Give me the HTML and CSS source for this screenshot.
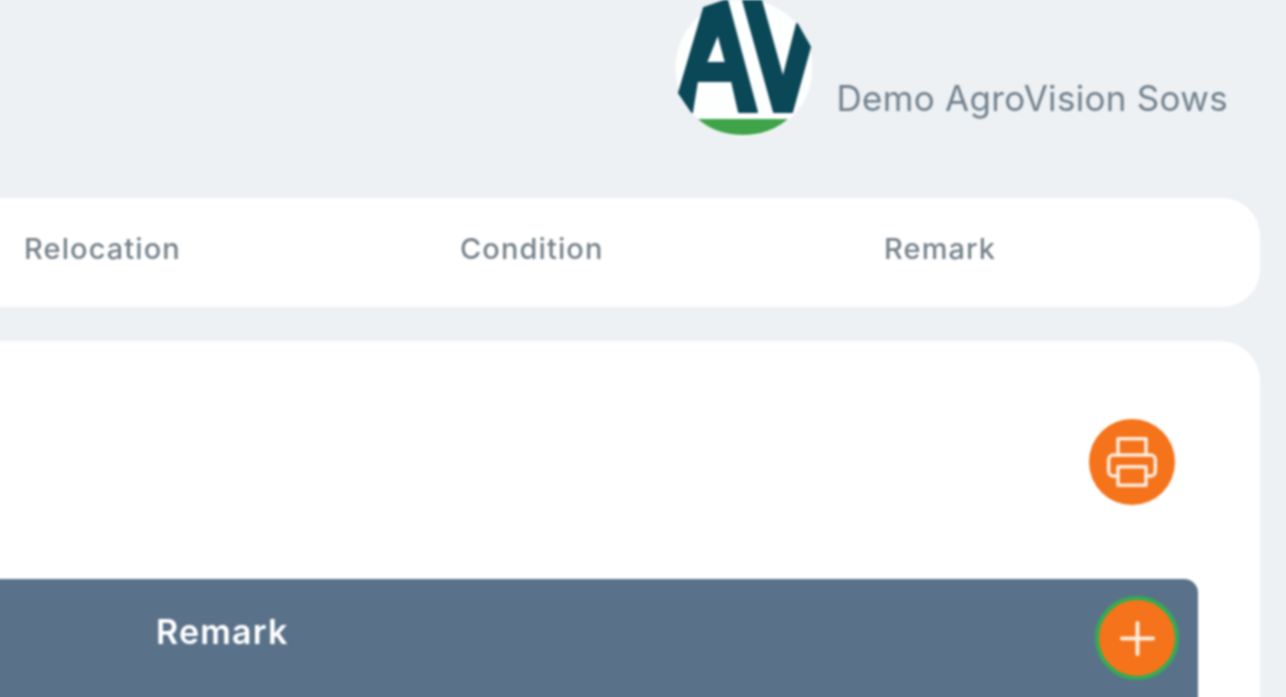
FILE: index.html
```html
<!DOCTYPE html>
<html lang="en">
<head>
<meta charset="utf-8">
<title>Demo AgroVision Sows</title>
<link rel="stylesheet" href="styles.css">
</head>
<body>
<div class="page">
  <header class="topbar">
    <svg class="logo" viewBox="675 0 137 137" aria-label="AgroVision logo">
      <circle cx="744" cy="68" r="68.5" fill="#fdfefe"/>
      <path fill="#0b4857" stroke="#0b4857" stroke-width="2" stroke-linejoin="round" fill-rule="evenodd" d="M704 8L727 0L757 112H739L732 81H697L692 112L679 93ZM718 33L706 63H726Z"/>
      <path fill="#0b4857" stroke="#0b4857" stroke-width="2" stroke-linejoin="round" d="M743 0H761L783 79L797 24L810 47L792 112H774Z"/>
      <path fill="#3fa34a" d="M698 119H788Q770 135 743 135Q716 135 698 119Z"/>
    </svg>
    <span class="farm-name">Demo AgroVision Sows</span>
  </header>
  <nav class="tabs">
    <span class="tab tab-relocation">Relocation</span>
    <span class="tab tab-condition">Condition</span>
    <span class="tab">Remark</span>
  </nav>
  <main class="card">
    <div class="actions">
      <button class="round-btn print-btn" type="button" aria-label="Print">
        <svg class="print-icon" viewBox="0 0 24 24" fill="none" stroke="currentColor" stroke-width="1.5" stroke-linecap="round" stroke-linejoin="round">
          <path d="M6 9V2h12v7"/>
          <path d="M6 18H4a2 2 0 0 1-2-2v-5a2 2 0 0 1 2-2h16a2 2 0 0 1 2 2v5a2 2 0 0 1-2 2h-2"/>
          <rect x="6" y="14" width="12" height="8"/>
        </svg>
      </button>
    </div>
    <div class="table-head">
      <span class="col-title">Remark</span>
      <button class="round-btn add-btn" type="button" aria-label="Add">
        <svg class="add-icon" viewBox="0 0 35 35" fill="none" stroke="currentColor" stroke-width="4" stroke-linecap="round">
          <path d="M17.5 2v31M2 17.5h31"/>
        </svg>
      </button>
    </div>
  </main>
</div>
</body>
</html>
```
FILE: styles.css
```css
* { box-sizing: border-box; }
html, body { margin: 0; height: 100%; overflow: hidden; }
body {
  background: #eef1f4;
  font-family: Inter, "Liberation Sans", sans-serif;
}
.page {
  display: flex;
  flex-direction: column;
  height: 705px;
  margin-left: -4px;
  padding-right: 26px;
  filter: blur(0.8px);
}
.topbar {
  display: flex;
  justify-content: flex-end;
  align-items: flex-start;
  height: 198px;
  padding-right: 32px;
  flex: none;
}
.logo { width: 137px; height: 137px; flex: none; }
.farm-name {
  margin: 77px 0 0 24px;
  font-size: 35px;
  letter-spacing: 0.3px;
  line-height: 42px;
  color: #70808c;
  white-space: nowrap;
}
.tabs {
  display: flex;
  align-items: center;
  height: 109px;
  flex: none;
  padding: 0 0 8px 28px;
  background: #fff;
  border-radius: 0 38px 38px 0;
}
.tab { font-size: 29px; letter-spacing: 1.1px; font-weight: 500; color: #76828b; }
.tab-relocation { width: 436px; }
.tab-condition { width: 424px; }
.card {
  flex: 1;
  margin-top: 34px;
  padding: 78px 0 0;
  background: #fff;
  border-radius: 0 40px 0 0;
}
.actions {
  display: flex;
  justify-content: flex-end;
  padding-right: 85px;
  margin-bottom: 74px;
}
.round-btn {
  display: flex;
  align-items: center;
  justify-content: center;
  padding: 0;
  border: 0;
  border-radius: 50%;
  background: #f5731b;
  color: #fdebdc;
}
.print-btn { width: 86px; height: 86px; }
.print-icon { width: 56px; height: 56px; }
.table-head {
  display: flex;
  justify-content: space-between;
  align-items: flex-start;
  height: 126px;
  margin-right: 62px;
  padding: 17px 19px 0 160px;
  background: #5a7289;
  border-radius: 0 14px 0 0;
}
.col-title {
  margin-top: 16px;
  font-size: 34px;
  letter-spacing: 1.2px;
  line-height: 40px;
  font-weight: 600;
  color: #fff;
}
.add-btn {
  width: 84px;
  height: 84px;
  border: 4px solid #2fae55;
  flex: none;
}
.add-icon { width: 35px; height: 35px; }
```
